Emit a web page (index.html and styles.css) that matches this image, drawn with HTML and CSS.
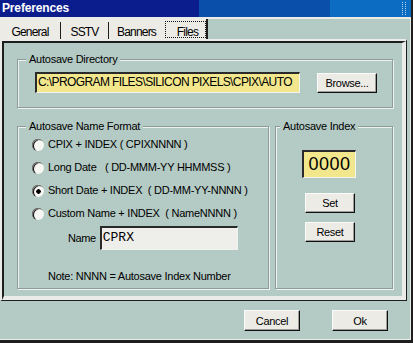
FILE: index.html
```html
<!DOCTYPE html>
<html lang="en">

<head>
  <meta charset="UTF-8" />
  <meta name="viewport" content="width=device-width, initial-scale=1.0" />
  <title>Preferences</title>
  <link rel="stylesheet" href="styles.css">
</head>

<body>
  <div class="window">
    <div class="titlebar">
      <span class="title">Preferences</span>
      <span class="grip"></span>
    </div>

    <div class="tabstrip">
      <div class="tab tab-general">General</div>
      <span class="tab-sep"></span>
      <div class="tab tab-sstv">SSTV</div>
      <span class="tab-sep"></span>
      <div class="tab tab-banners">Banners</div>
      <div class="tab tab-files"><span class="focus">Files</span></div>
    </div>

    <div class="panel">
      <div class="panel-body">
        <fieldset class="group group-dir">
          <legend>Autosave Directory</legend>
          <div class="dir-row">
            <input class="field field-dir" type="text" value="C:\PROGRAM FILES\SILICON PIXELS\CPIX\AUTO" />
            <button class="btn btn-browse">Browse...</button>
          </div>
        </fieldset>

        <div class="lower">
          <fieldset class="group group-format">
            <legend>Autosave Name Format</legend>
            <label class="option"><span class="radio"></span>CPIX + INDEX ( CPIXNNNN )</label>
            <label class="option"><span class="radio"></span>Long Date   ( DD-MMM-YY HHMMSS )</label>
            <label class="option"><span class="radio checked"></span>Short Date + INDEX  ( DD-MM-YY-NNNN )</label>
            <label class="option"><span class="radio"></span>Custom Name + INDEX  ( NameNNNN )</label>
            <div class="name-row">
              <span>Name</span>
              <input class="field field-name" type="text" value="CPRX" />
            </div>
            <p class="note">Note: NNNN = Autosave Index Number</p>
          </fieldset>

          <fieldset class="group group-index">
            <legend>Autosave Index</legend>
            <div class="index-body">
              <div class="counter">0000</div>
              <button class="btn btn-small btn-set">Set</button>
              <button class="btn btn-small btn-reset">Reset</button>
            </div>
          </fieldset>
        </div>
      </div>
    </div>

    <div class="footer">
      <button class="btn btn-dialog">Cancel</button>
      <button class="btn btn-dialog">Ok</button>
    </div>
  </div>
</body>

</html>
```

FILE: styles.css
```css
* {
  box-sizing: border-box;
}

body {
  margin: 0;
  font-family: "Liberation Sans", Arial, sans-serif;
  font-size: 11px;
  letter-spacing: -0.25px;
  color: #000;
}

.window {
  width: 413px;
  height: 343px;
  display: flex;
  flex-direction: column;
  background: #b4cac4;
  border-right: 2px solid #1e1e1e;
  border-bottom: 3px solid #1e1e1e;
  box-shadow: inset -1px -1px 0 #e9ece8;
}

/* title bar with the stepped gradient */
.titlebar {
  height: 17px;
  flex: none;
  display: flex;
  align-items: center;
  padding-left: 2px;
  background: linear-gradient(to right, #0b1d8d 0 199px, #0a4fa9 199px 330px, #0b6cc2 330px);
  color: #fff;
}

.title {
  flex: 1;
  font-size: 12px;
  font-weight: bold;
  letter-spacing: -0.15px;
  line-height: 17px;
}

.grip {
  width: 4px;
  height: 13px;
  margin-right: 5px;
  border-left: 1px dotted #b9d4ec;
  border-right: 1px dotted #b9d4ec;
}

/* tabs */
.tabstrip {
  height: 22px;
  flex: none;
  display: flex;
  border-top: 2px solid #ecebe6;
  font-size: 12px;
  letter-spacing: -0.8px;
  line-height: 14px;
}

.tab {
  background: #ecebe6;
  text-align: center;
  padding-top: 6px;
}

.tab-general {
  width: 60px;
}

.tab-sstv {
  width: 47px;
}

.tab-banners {
  width: 55px;
}

.tab-sep {
  width: 1px;
  background: #1e1e1e;
  border-top: 3px solid #ecebe6;
}

.tab-files {
  width: 44px;
  display: flex;
  padding: 2px 0 1px 1px;
  border-right: 2px solid #1e1e1e;
}

.focus {
  flex: 1;
  border: 1px dotted #111;
  padding: 3px 0 0 4px;
}

/* tab page */
.panel {
  height: 262px;
  width: 407px;
  flex: none;
  border-style: solid;
  border-width: 2px 1px 1px 2px;
  border-color: #e9ece8 #1e1e1e #1e1e1e #e9ece8;
}

.panel-body {
  height: 100%;
  border-style: solid;
  border-width: 2px 4px 4px 2px;
  border-color: #1e1e1e #e9ece8 #e9ece8 #1e1e1e;
  padding-left: 13px;
}

.group {
  margin: 0;
  padding: 0;
  min-width: 0;
  border: 1px solid #8d9e98;
  box-shadow: inset 1px 1px 0 #eef1ed, 1px 1px 0 #eef1ed;
}

.group legend {
  padding: 0 3px;
  margin-left: 8px;
  line-height: 13px;
  background: #b4cac4;
}

.group-dir {
  margin-top: 10px;
  width: 376px;
}

.dir-row {
  display: flex;
  align-items: flex-start;
  gap: 17px;
  margin: 6px 0 14px 17px;
}

.lower {
  display: flex;
  gap: 6px;
  margin-top: 12px;
}

.group-format {
  width: 252px;
}

.group-index {
  width: 118px;
}

.group-index legend {
  margin-left: 4px;
}

.option {
  display: flex;
  align-items: center;
  height: 23px;
  padding-left: 14px;
  white-space: pre;
  line-height: 13px;
}

.radio {
  flex: none;
  width: 12px;
  height: 12px;
  margin-right: 4px;
  border-radius: 50%;
  background: #f6f6f2;
  box-shadow: inset 1px 1px 0 #7c7c7a, inset 2px 1px 0 #151515;
}

.radio.checked {
  background: radial-gradient(circle at 6.5px 6.5px, #000 0 2px, #f6f6f2 2.5px);
}

.name-row {
  display: flex;
  align-items: center;
  gap: 4px;
  margin: 1px 0 0 50px;
  letter-spacing: -0.4px;
}

.note {
  margin: 20px 0 5px 30px;
  line-height: 13px;
}

.field {
  font-family: "Liberation Sans", Arial, sans-serif;
  color: #000;
  border-style: solid;
  border-width: 2px 1px 1px 2px;
  border-color: #2a2a2a #f1f3ef #f1f3ef #2a2a2a;
  padding: 0 0 0 1px;
  outline: none;
}

.field-dir {
  width: 265px;
  height: 21px;
  padding-bottom: 2px;
  background: #f2e78d;
  font-size: 12px;
  letter-spacing: -0.6px;
}

.field-name {
  width: 138px;
  height: 24px;
  padding-bottom: 3px;
  background: #eeeeea;
  font-family: "Liberation Mono", monospace;
  font-size: 13px;
  letter-spacing: 0;
}

.index-body {
  display: flex;
  flex-direction: column;
  align-items: flex-start;
  padding-left: 26px;
}

.counter {
  width: 54px;
  height: 28px;
  margin-top: 17px;
  display: flex;
  align-items: center;
  justify-content: center;
  background: #f2e78d;
  border-style: solid;
  border-width: 2px 1px 1px 2px;
  border-color: #2a2a2a #f1f3ef #f1f3ef #2a2a2a;
  font-size: 18px;
  letter-spacing: 0.5px;
}

/* buttons */
.btn {
  font: inherit;
  letter-spacing: -0.3px;
  color: #000;
  padding: 0;
  background: #ecebe6;
  border: 1px solid;
  border-color: #fbfbf9 #101010 #101010 #fbfbf9;
  box-shadow: inset -1px -1px 0 #9c9c98;
}

.btn-browse {
  width: 60px;
  height: 20px;
  margin-top: 1px;
}

.btn-small {
  width: 50px;
  height: 20px;
  margin-left: 3px;
}

.btn-set {
  margin-top: 15px;
}

.btn-reset {
  margin-top: 9px;
}

.footer {
  flex: 1;
  display: flex;
  justify-content: flex-end;
  align-items: flex-start;
  gap: 32px;
  padding: 9px 23px 0 0;
}

.btn-dialog {
  width: 56px;
  height: 21px;
}
```
